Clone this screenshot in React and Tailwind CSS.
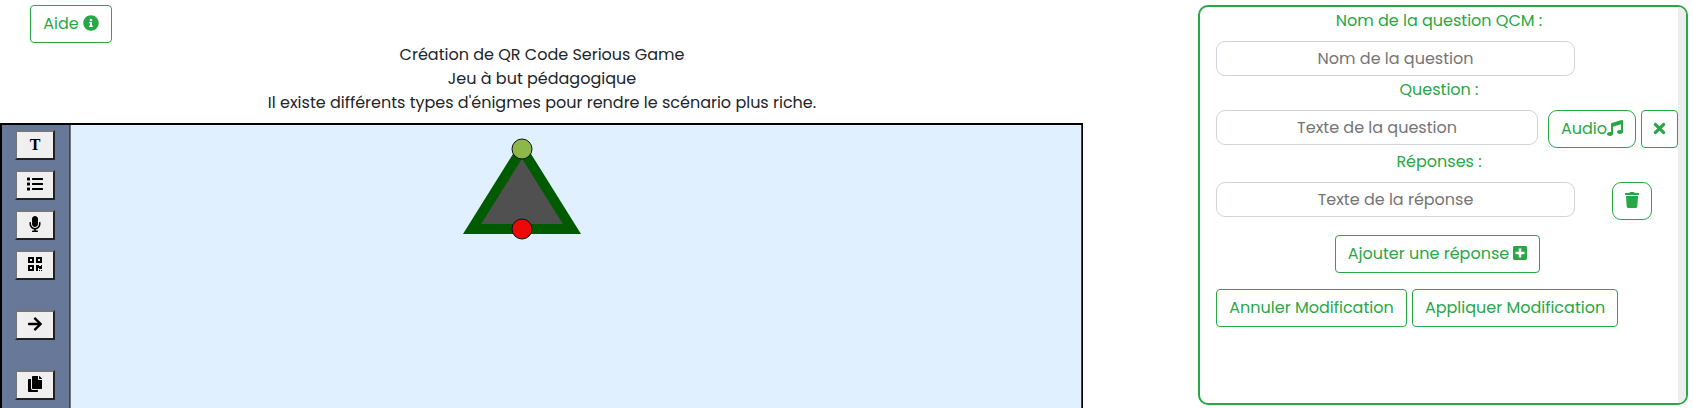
import {
  FaArrowRight,
  FaCopy,
  FaInfoCircle,
  FaList,
  FaMicrophone,
  FaMusic,
  FaPlusSquare,
  FaQrcode,
  FaTimes,
  FaTrash,
} from "react-icons/fa";

function ToolButton({ label, className = "", children }) {
  return (
    <button
      aria-label={label}
      className={`flex h-[30px] w-10 shrink-0 items-center justify-center border-2 border-t-[#767676] border-l-[#767676] border-r-[#212121] border-b-[#212121] bg-[#efefef] text-base leading-none text-black [&>svg]:-mt-[2px] ${className}`}
    >
      {children}
    </button>
  );
}

function OutlineButton({ className = "", children, label }) {
  return (
    <button
      aria-label={label}
      className={`flex h-[38px] shrink-0 items-center justify-center border border-[#28a745] whitespace-nowrap text-[#28a745] [&>svg]:-mt-[2px] [&>svg]:shrink-0 ${className}`}
    >
      {children}
    </button>
  );
}

function Field({ placeholder, className = "" }) {
  return (
    <input
      placeholder={placeholder}
      className={`h-[35px] shrink-0 rounded-[9px] border border-[#ced4da] bg-white text-center placeholder:text-[#757575] ${className}`}
    />
  );
}

function Header() {
  return (
    <header className="h-[123px] pt-[5px]">
      <OutlineButton className="ml-[30px] w-[82px] gap-1 rounded">
        <span>Aide</span>
        <FaInfoCircle />
      </OutlineButton>
      <div className="pl-px text-center">
        <p>Création de QR Code Serious Game</p>
        <p>Jeu à but pédagogique</p>
        <p>Il existe différents types d'énigmes pour rendre le scénario plus riche.</p>
      </div>
    </header>
  );
}

function Scene() {
  return (
    <svg className="ml-[391px] mt-[9px] h-[110px] w-[120px]" viewBox="462 134 120 110">
      <polygon points="522,149 472,229 572,229" fill="#505050" stroke="#005a00" strokeWidth="10" strokeMiterlimit="10" />
      <circle cx="522" cy="149" r="10" fill="#8db849" stroke="#111" strokeWidth="1" />
      <circle cx="522" cy="229" r="10" fill="#eb0a05" stroke="#111" strokeWidth="1" />
    </svg>
  );
}

function Editor() {
  return (
    <section className="flex h-[285px] w-[1083px] overflow-hidden border-2 border-b-0 border-black border-r-1">
      <nav className="flex w-[68px] shrink-0 flex-col gap-[10px] border-r border-[#3b4358] bg-[#687899] pl-[13px] pt-[5px]">
        <ToolButton label="Texte">
          <span className="font-['Liberation_Serif',serif] font-bold">T</span>
        </ToolButton>
        <ToolButton label="Liste"><FaList /></ToolButton>
        <ToolButton label="Micro"><FaMicrophone /></ToolButton>
        <ToolButton label="QR code"><FaQrcode /></ToolButton>
        <ToolButton label="Lien" className="mt-5"><FaArrowRight /></ToolButton>
        <ToolButton label="Copier" className="mt-5"><FaCopy /></ToolButton>
      </nav>
      <div className="grow border-x border-l-[#777] border-r-[#444] bg-[#e0f0ff]">
        <Scene />
      </div>
    </section>
  );
}

function QuestionPanel() {
  return (
    <aside className="ml-[115px] mt-[5px] flex h-[400px] w-[490px] overflow-hidden rounded-[10px] border-2 border-[#28a745] text-[#28a745]">
      <div className="w-[478px] shrink-0 pl-4 pt-[2px]">
        <p className="w-[446px] text-center">Nom de la question QCM :</p>
        <Field placeholder="Nom de la question" className="mt-2 block w-[359px]" />
        <p className="mt-[2px] w-[446px] text-center">Question :</p>
        <div className="mt-2 flex">
          <Field placeholder="Texte de la question" className="w-[322px]" />
          <OutlineButton className="ml-[10px] w-[88px] rounded-[9px]">
            <span>Audio</span>
            <FaMusic />
          </OutlineButton>
          <OutlineButton label="Supprimer l'audio" className="ml-[5px] w-[37px] rounded">
            <FaTimes className="text-[17px]" />
          </OutlineButton>
        </div>
        <p className="mt-[2px] w-[446px] text-center">Réponses :</p>
        <div className="mt-2 flex">
          <Field placeholder="Texte de la réponse" className="w-[359px]" />
          <OutlineButton label="Supprimer la réponse" className="ml-[37px] w-10 rounded-[9px]"><FaTrash /></OutlineButton>
        </div>
        <OutlineButton className="ml-[119px] mt-[15px] w-[205px] gap-[3px] rounded pl-px">
          <span>Ajouter une réponse</span>
          <FaPlusSquare />
        </OutlineButton>
        <div className="mt-4 flex gap-[5px]">
          <OutlineButton className="w-[191px] rounded">Annuler Modification</OutlineButton>
          <OutlineButton className="w-[206px] rounded">Appliquer Modification</OutlineButton>
        </div>
      </div>
      <div className="w-2 shrink-0 bg-[#ededed]" />
    </aside>
  );
}

export default function App() {
  return (
    <main className="flex h-[408px] w-[1693px] overflow-hidden bg-white font-['Poppins','Inter',sans-serif] text-base leading-6 text-[#212529]">
      <div className="w-[1083px] shrink-0">
        <Header />
        <Editor />
      </div>
      <QuestionPanel />
    </main>
  );
}
